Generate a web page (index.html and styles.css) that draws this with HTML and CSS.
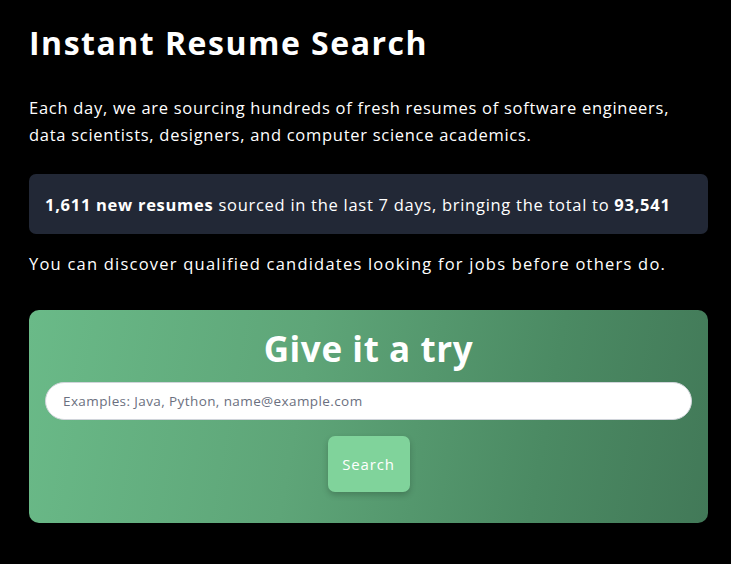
FILE: index.html
```html
<!DOCTYPE html>
<html>
<head>
<meta charset="utf-8">
<link rel="stylesheet" href="styles.css">
</head>
<body>
<main class="page">
  <h1 class="title">Instant Resume Search</h1>
  <p class="intro">Each day, we are sourcing hundreds of fresh resumes of software engineers, data scientists, designers, and computer science academics.</p>
  <div class="stats"><span><b>1,611 new resumes</b> sourced in the last 7 days, bringing the total to <b>93,541</b></span></div>
  <p class="note">You can discover qualified candidates looking for jobs before others do.</p>
  <section class="try">
    <h2 class="try-title">Give it a try</h2>
    <input class="search-input" type="text" placeholder="Examples: Java, Python, name@example.com">
    <button class="search-btn">Search</button>
  </section>
</main>
</body>
</html>
```
FILE: styles.css
```css
html, body {
  margin: 0;
  background: #000;
}
body {
  font-family: "Open Sans", "Noto Sans", sans-serif;
  color: #fff;
}
.page {
  width: 679px;
  padding: 23px 0 0 29px;
}
.title {
  margin: 0;
  font-size: 32px;
  font-weight: 700;
  line-height: 40px;
  letter-spacing: 1.5px;
}
.intro {
  margin: 31px 0 0 0;
  font-size: 16.5px;
  line-height: 27px;
  letter-spacing: 0.72px;
}
.stats {
  margin-top: 26px;
  background: #222836;
  border-radius: 7px;
  height: 60px;
  padding: 0 16px;
  display: flex;
  align-items: center;
  font-size: 16.5px;
  letter-spacing: 0.72px;
}
.stats b { font-weight: 700; }
.note {
  margin: 16px 0 0 0;
  font-size: 16.5px;
  line-height: 27px;
  letter-spacing: 1.22px;
}
.try {
  margin-top: 33px;
  height: 213px;
  box-sizing: border-box;
  border-radius: 10px;
  background: linear-gradient(100deg, #6aba88 0%, #5ea578 40%, #4b8a63 75%, #427958 100%);
  display: flex;
  flex-direction: column;
  align-items: center;
  padding: 17px 16px 0 16px;
}
.try-title {
  margin: 0;
  font-size: 35px;
  font-weight: 700;
  line-height: 44px;
  letter-spacing: 0.6px;
}
.search-input {
  margin-top: 11px;
  width: 100%;
  height: 38px;
  box-sizing: border-box;
  border: 1px solid #d0d4da;
  border-radius: 19px;
  padding: 0 17px;
  font-family: inherit;
  font-size: 13.5px;
  letter-spacing: 0.4px;
  background: #fff;
  outline: none;
}
.search-input::placeholder { color: #6b7080; }
.search-btn {
  margin-top: 16px;
  width: 82px;
  height: 56px;
  border: none;
  border-radius: 7px;
  background: #80d39b;
  color: #fff;
  font-family: inherit;
  font-size: 15px;
  letter-spacing: 0.8px;
  box-shadow: 0 3px 6px rgba(0,0,0,0.2);
}
```
